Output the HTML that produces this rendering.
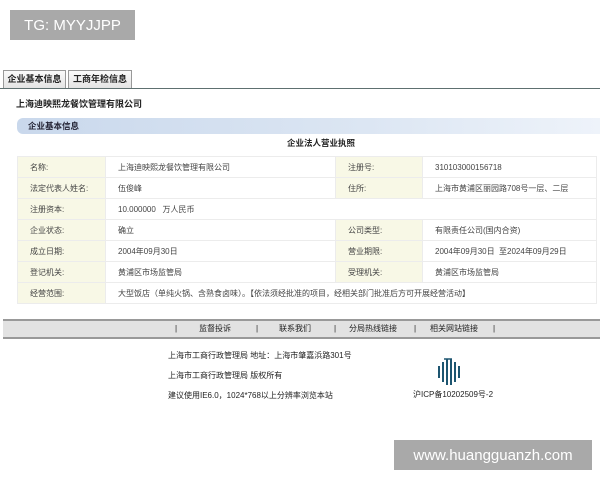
<!DOCTYPE html>
<html><head><meta charset="utf-8"><style>
*{margin:0;padding:0;box-sizing:border-box}
body{width:600px;height:480px;background:#fff;position:relative;overflow:hidden;font-family:"Liberation Sans","Noto Sans CJK SC",sans-serif;color:#222}
.abs{position:absolute}
.wm{background:#a9a9a9;color:#fff;font-size:15px;display:flex;align-items:center;justify-content:center}
.tab{top:70px;height:18px;border:1px solid #999;border-bottom:none;background:linear-gradient(#fafafa,#e4e4e4);font-size:9px;font-weight:bold;line-height:17px;text-align:center}
table{border-collapse:collapse;font-size:8px;color:#444}
td{border:1px solid #ececec;height:21px;padding-left:12px}
td.l{background:#f8f8e6}
.ft{font-size:8px;color:#222}
</style></head><body>
<div class="abs wm" style="left:10px;top:10px;width:125px;height:30px">TG: MYYJJPP</div>
<div class="abs tab" style="left:3px;width:63px">企业基本信息</div>
<div class="abs tab" style="left:68px;width:64px">工商年检信息</div>
<div class="abs" style="left:0;top:88px;width:600px;height:1px;background:#5e7070"></div>
<div class="abs" style="left:16px;top:97px;font-size:9px;font-weight:bold">上海迪映熙龙餐饮管理有限公司</div>
<div class="abs" style="left:17px;top:118px;width:583px;height:16px;border-radius:6px 0 0 6px;background:linear-gradient(90deg,#c9d8ec,#dce6f3 60%,#eef3fa);font-size:8.5px;font-weight:bold;line-height:16px;padding-left:11px;color:#223">企业基本信息</div>
<div class="abs" style="left:287px;top:137px;font-size:8.5px;font-weight:bold">企业法人营业执照</div>
<table class="abs" style="left:17px;top:156px;width:580px">
<tr><td class="l" style="width:88px">名称:</td><td style="width:230px">上海迪映熙龙餐饮管理有限公司</td><td class="l" style="width:87px">注册号:</td><td>310103000156718</td></tr>
<tr><td class="l">法定代表人姓名:</td><td>伍俊峰</td><td class="l">住所:</td><td>上海市黄浦区丽园路708号一层、二层</td></tr>
<tr><td class="l">注册资本:</td><td colspan="3">10.000000 &nbsp; 万人民币</td></tr>
<tr><td class="l">企业状态:</td><td>确立</td><td class="l">公司类型:</td><td>有限责任公司(国内合资)</td></tr>
<tr><td class="l">成立日期:</td><td>2004年09月30日</td><td class="l">营业期限:</td><td>2004年09月30日 &nbsp;至2024年09月29日</td></tr>
<tr><td class="l">登记机关:</td><td>黄浦区市场监管局</td><td class="l">受理机关:</td><td>黄浦区市场监管局</td></tr>
<tr><td class="l">经营范围:</td><td colspan="3">大型饭店（单纯火锅、含熟食卤味）。【依法须经批准的项目，经相关部门批准后方可开展经营活动】</td></tr>
</table>
<div class="abs ft" style="left:3px;top:319px;width:597px;height:20px;background:#e2e2e2;border-top:2px solid #999;border-bottom:2px solid #999;line-height:16px">
<span class="abs" style="left:172px">|</span><span class="abs" style="left:196px">监督投诉</span><span class="abs" style="left:253px">|</span><span class="abs" style="left:276px">联系我们</span><span class="abs" style="left:331px">|</span><span class="abs" style="left:346px">分局热线链接</span><span class="abs" style="left:411px">|</span><span class="abs" style="left:427px">相关网站链接</span><span class="abs" style="left:490px">|</span></div>
<div class="abs ft" style="left:168px;top:350px">上海市工商行政管理局 地址：上海市肇嘉浜路301号</div>
<div class="abs ft" style="left:168px;top:370px">上海市工商行政管理局 版权所有</div>
<div class="abs ft" style="left:168px;top:390px">建议使用IE6.0，1024*768以上分辨率浏览本站</div>
<svg class="abs" style="left:437px;top:358px" width="26" height="28" viewBox="0 0 26 28"><g fill="none" stroke="#1d5570" stroke-width="2"><path d="M2 8v12M6 4v20M10 1v26M14 1v26M18 4v20M22 8v12"/></g><path d="M7 1h8" stroke="#1d5570" stroke-width="1.5"/></svg>
<div class="abs ft" style="left:413px;top:389px">沪ICP备10202509号-2</div>
<div class="abs wm" style="left:394px;top:440px;width:198px;height:30px;font-size:15px">www.huangguanzh.com</div>
</body></html>
